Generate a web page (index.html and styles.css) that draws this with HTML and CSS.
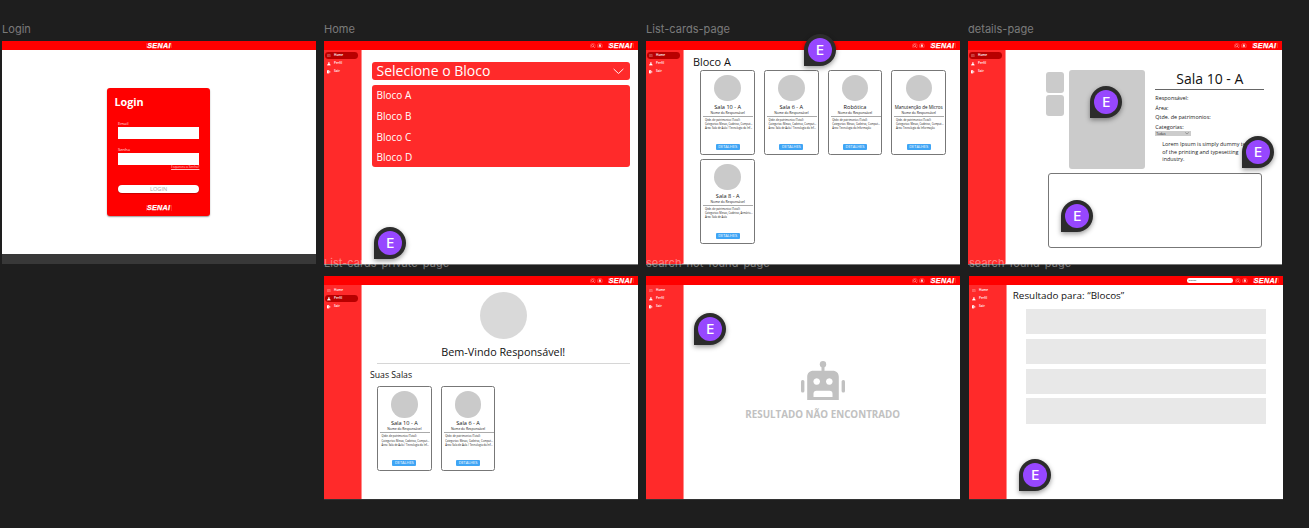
FILE: index.html
```html
<!DOCTYPE html>
<html lang="pt-BR">
<head>
<meta charset="utf-8">
<title>SENAI</title>
<link rel="stylesheet" href="styles.css">
</head>
<body>
<svg width="0" height="0" class="defs">
  <symbol id="search" viewBox="0 0 12 12"><circle cx="6" cy="6" r="5.3" fill="none" stroke="currentColor" stroke-opacity=".5"/><circle cx="5.4" cy="5.4" r="2.3" fill="none" stroke="currentColor"/><path d="M7 7l2.4 2.4" stroke="currentColor"/></symbol>
  <symbol id="bell" viewBox="0 0 12 12"><circle cx="6" cy="6" r="5.3" fill="none" stroke="currentColor" stroke-opacity=".6"/><path d="M6 2.5c2 0 2.2 1.500 2.200 3.500l.8 2H3l.8-2C3.800 4 4 2.500 6 2.500zM5 8.500h2v1H5z" fill="currentColor"/></symbol>
  <symbol id="home" viewBox="0 0 12 12"><path d="M1.500 1.500h9v9h-9zM4 4h4M4 6h4M4 8h4" fill="none" stroke="currentColor" stroke-opacity=".75"/></symbol>
  <symbol id="user" viewBox="0 0 12 12"><circle cx="6" cy="3.500" r="2.700" fill="currentColor"/><path d="M0 11c0-4 3-4.500 6-4.500s6 .5 6 4.500z" fill="currentColor"/></symbol>
  <symbol id="exit" viewBox="0 0 12 12"><path d="M0 1h7v3H5v4h2v3H0z" fill="currentColor"/><path d="M5 5h3V3l4 3-4 3V7H5z" fill="currentColor"/></symbol>
  <symbol id="chev" viewBox="0 0 12 7"><path d="M.7 1L6 6l5.300-5" fill="none" stroke="currentColor"/></symbol>
</svg>
<div class="canvas">

  <section class="frame login-frame">
    <header class="topbar centered"><span class="logo">SENAI</span></header>
    <main class="login-main">
      <form class="login">
        <h1>Login</h1>
        <label>Email</label><span class="field"></span>
        <label>Senha</label><span class="field"></span>
        <a class="forgot">Esqueceu a Senha?</a>
        <span class="submit">LOGIN</span>
        <span class="logo">SENAI</span>
      </form>
    </main>
    <footer class="foot"></footer>
  </section>

  <section class="frame home-frame">
    <header class="topbar"><svg><use href="#search"/></svg><svg><use href="#bell"/></svg><span class="logo">SENAI</span></header>
    <div class="body">
      <nav class="side"><a class="on"><svg><use href="#home"/></svg>Home</a><a><svg><use href="#user"/></svg>Perfil</a><a><svg><use href="#exit"/></svg>Sair</a></nav>
      <main class="home-main">
        <div class="select"><span>Selecione o Bloco</span><svg><use href="#chev"/></svg></div>
        <div class="options"><span>Bloco A</span><span>Bloco B</span><span>Bloco C</span><span>Bloco D</span></div>
      </main>
    </div>
  </section>

  <section class="frame list-frame">
    <header class="topbar"><svg><use href="#search"/></svg><svg><use href="#bell"/></svg><span class="logo">SENAI</span></header>
    <div class="body">
      <nav class="side"><a class="on"><svg><use href="#home"/></svg>Home</a><a><svg><use href="#user"/></svg>Perfil</a><a><svg><use href="#exit"/></svg>Sair</a></nav>
      <main class="list-main">
        <h2>Bloco A</h2>
        <div class="cards">
          <article class="card"><i></i><h3>Sala 10 - A</h3><h4>Nome do Responsável</h4><hr><p>Qtde. de patrimonios (Total):</p><p>Categorias: Mesas, Cadeiras, Comput...</p><p>Área: Sala de Aula / Tecnologia da Inf...</p><b>DETALHES</b></article>
          <article class="card"><i></i><h3>Sala 6 - A</h3><h4>Nome do Responsável</h4><hr><p>Qtde. de patrimonios (Total):</p><p>Categorias: Mesas, Cadeiras, Comput...</p><p>Área: Sala de Aula / Tecnologia da Inf...</p><b>DETALHES</b></article>
          <article class="card"><i></i><h3>Robótica</h3><h4>Nome do Responsável</h4><hr><p>Qtde. de patrimonios (Total):</p><p>Categorias: Mesas, Cadeiras, Comput...</p><p>Área: Tecnologia da Informação</p><b>DETALHES</b></article>
          <article class="card"><i></i><h3 class="long">Manutenção de Micros</h3><h4>Nome do Responsável</h4><hr><p>Qtde. de patrimonios (Total):</p><p>Categorias: Mesas, Cadeiras, Comput...</p><p>Área: Tecnologia da Informação</p><b>DETALHES</b></article>
          <article class="card"><i></i><h3>Sala 8 - A</h3><h4>Nome do Responsável</h4><hr><p>Qtde. de patrimonios (Total):</p><p>Categorias: Mesas, Cadeiras, Armário...</p><p>Área: Sala de Aula</p><b>DETALHES</b></article>
        </div>
      </main>
    </div>
  </section>

  <section class="frame details-frame">
    <header class="topbar"><svg><use href="#search"/></svg><svg><use href="#bell"/></svg><span class="logo">SENAI</span></header>
    <div class="body">
      <nav class="side"><a class="on"><svg><use href="#home"/></svg>Home</a><a><svg><use href="#user"/></svg>Perfil</a><a><svg><use href="#exit"/></svg>Sair</a></nav>
      <main class="details-main">
        <div class="product">
          <div class="thumbs"><span></span><span></span></div>
          <div class="photo"></div>
          <div class="info">
            <h2>Sala 10 - A</h2>
            <p>Responsável:</p><p>Área:</p><p>Qtde. de patrimonios:</p><p>Categorias:</p>
            <div class="mini">Todas<svg><use href="#chev"/></svg></div>
            <div class="lorem">Lorem Ipsum is simply dummy text<br>of the printing and typesetting<br>industry.</div>
          </div>
        </div>
        <div class="panel"></div>
      </main>
    </div>
  </section>

  <section class="frame private-frame">
    <header class="topbar"><svg><use href="#search"/></svg><svg><use href="#bell"/></svg><span class="logo">SENAI</span></header>
    <div class="body">
      <nav class="side"><a><svg><use href="#home"/></svg>Home</a><a class="on"><svg><use href="#user"/></svg>Perfil</a><a><svg><use href="#exit"/></svg>Sair</a></nav>
      <main class="private-main">
        <div class="avatar"></div>
        <h2>Bem-Vindo Responsável!</h2>
        <h3 class="sub">Suas Salas</h3>
        <div class="cards">
          <article class="card"><i></i><h3>Sala 10 - A</h3><h4>Nome do Responsável</h4><hr><p>Qtde. de patrimonios (Total):</p><p>Categorias: Mesas, Cadeiras, Comput...</p><p>Área: Sala de Aula / Tecnologia da Inf...</p><b>DETALHES</b></article>
          <article class="card"><i></i><h3>Sala 6 - A</h3><h4>Nome do Responsável</h4><hr><p>Qtde. de patrimonios (Total):</p><p>Categorias: Mesas, Cadeiras, Comput...</p><p>Área: Sala de Aula / Tecnologia da Inf...</p><b>DETALHES</b></article>
        </div>
      </main>
    </div>
  </section>

  <section class="frame empty-frame">
    <header class="topbar"><svg><use href="#search"/></svg><svg><use href="#bell"/></svg><span class="logo">SENAI</span></header>
    <div class="body">
      <nav class="side"><a><svg><use href="#home"/></svg>Home</a><a><svg><use href="#user"/></svg>Perfil</a><a><svg><use href="#exit"/></svg>Sair</a></nav>
      <main class="empty-main">
        <svg class="robot" viewBox="0 0 44 40"><g fill="#c1c1c1"><circle cx="22" cy="3.300" r="3.200"/><path d="M20.500 3h3v8h-3z"/><rect x="0" y="19" width="3.400" height="12.500" rx="1.500"/><rect x="40.600" y="19" width="3.400" height="12.500" rx="1.500"/><path fill-rule="evenodd" d="M6.200 39V16c0-4 2.300-6.300 6.300-6.300h19c4 0 6.300 2.300 6.300 6.300v23zM15.700 17.200a3.300 3.300 0 1 0 .01 0zM28.300 17.200a3.300 3.300 0 1 0 .01 0zM15.500 29.800q-3 0-3 3V36h19v-3.200q0-3-3-3z"/></g></svg>
        <p>RESULTADO NÃO ENCONTRADO</p>
      </main>
    </div>
  </section>

  <section class="frame found-frame">
    <header class="topbar"><span class="query">Blocos</span><svg><use href="#search"/></svg><svg><use href="#bell"/></svg><span class="logo">SENAI</span></header>
    <div class="body">
      <nav class="side"><a><svg><use href="#home"/></svg>Home</a><a><svg><use href="#user"/></svg>Perfil</a><a><svg><use href="#exit"/></svg>Sair</a></nav>
      <main class="found-main">
        <h2>Resultado para: “Blocos”</h2>
        <div class="rows"><span></span><span></span><span></span><span></span></div>
      </main>
    </div>
  </section>

  <span class="label l1">Login</span>
  <span class="label l2">Home</span>
  <span class="label l3">List-cards-page</span>
  <span class="label l4">details-page</span>
  <span class="label l5">List-cards-private-page</span>
  <span class="label l6">search-not-found-page</span>
  <span class="label l7">search-found-page</span>

  <span class="pin p1"><em>E</em></span>
  <span class="pin p2"><em>E</em></span>
  <span class="pin p3"><em>E</em></span>
  <span class="pin p4"><em>E</em></span>
  <span class="pin p5"><em>E</em></span>
  <span class="pin p6"><em>E</em></span>
  <span class="pin p7"><em>E</em></span>
</div>
</body>
</html>
```

FILE: styles.css
```css
* { box-sizing: border-box; }
body { margin: 0; background: #1e1e1e; font-family: "Open Sans", sans-serif; color: #111; }
h1, h2, h3, h4, p { margin: 0; font-weight: 400; white-space: nowrap; }
.defs { position: absolute; }
.canvas { position: relative; width: 1309px; height: 528px; overflow: hidden; }

/* frames on the free canvas */
.frame { position: absolute; top: 41px; width: 314px; height: 223px; background: #fff; display: flex; flex-direction: column; box-shadow: 0 1px 0 #777; }
.login-frame { left: 2px; box-shadow: none; }
.home-frame { left: 324px; }
.list-frame { left: 646px; }
.details-frame { left: 968px; }
.private-frame { left: 324px; }
.empty-frame { left: 646px; }
.found-frame { left: 969px; }
.private-frame, .empty-frame, .found-frame { top: 276px; box-shadow: 0 1px 0 #333; }

.label { position: absolute; font: 11px/14px Inter, sans-serif; letter-spacing: .03px; color: rgba(255, 255, 255, .42); top: 22px; white-space: nowrap; }
.l1 { left: 2px; }
.l2, .l5 { left: 324px; }
.l3, .l6 { left: 646px; }
.l4 { left: 968px; }
.l7 { left: 969px; }
.l5, .l6, .l7 { top: 256px; }

.pin { position: absolute; width: 32px; height: 32px; padding: 4px; background: #2c2c2c; border-radius: 16px 16px 16px 0; box-shadow: 0 2px 5px rgba(0, 0, 0, .4); }
.pin em { display: block; height: 24px; border-radius: 12px; background: #9747ff; color: #fff; font: 500 13.500px/24px Inter, sans-serif; text-align: center; }
.p1 { left: 374.400px; top: 227.400px; }
.p2 { left: 804px; top: 34.400px; }
.p3 { left: 1090.300px; top: 86.300px; }
.p4 { left: 1242px; top: 136.300px; }
.p5 { left: 1061.400px; top: 200.400px; }
.p6 { left: 694.400px; top: 313.400px; }
.p7 { left: 1019.400px; top: 459px; }

/* shared chrome */
.topbar { flex: none; height: 9px; background: #f00; color: #fff; display: flex; align-items: center; justify-content: flex-end; gap: 1.500px; padding-right: 4.500px; }
.topbar.centered { justify-content: center; padding: 0; }
.topbar svg { width: 5.800px; height: 5.800px; opacity: .85; }
.logo { display: block; width: 26px; height: 5.600px; border: solid rgba(255, 255, 255, .16); border-width: 0 1px; font: italic bold 7.200px/6px "Liberation Sans", sans-serif; letter-spacing: .3px; text-align: center; color: #fff; -webkit-text-stroke: .25px #fff; margin-left: 2.800px; }
.centered .logo { margin: 0; }
.body { flex: 1; display: flex; min-height: 0; }
.side { flex: none; width: 38px; background: #ff2a2a; padding: 2px 3px 0 1.400px; display: flex; flex-direction: column; gap: 1.400px; border-right: 1px solid #ff8b8b; }
.side a { display: flex; align-items: center; height: 6.700px; border-radius: 3.400px; padding-left: 2px; gap: 2.800px; color: #fff; font-size: 3.200px; font-weight: 600; line-height: 6.600px; padding-top: .4px; }
.side .on { background: #b80000; }
.side svg { width: 3.800px; height: 3.800px; }

/* login */
.login-main { flex: 1; padding: 38.400px 0 0 105.400px; }
.login { width: 102.500px; height: 128px; background: #f00; border-radius: 3px; box-shadow: 0 1px 1.500px rgba(0, 0, 0, .4); padding: 5.500px 10.500px 0; color: #fff; display: flex; flex-direction: column; }
.login h1 { font-size: 10.800px; line-height: 15px; font-weight: 700; margin: 0 0 12px -3.500px; }
.login label { font-size: 4.200px; line-height: 6px; opacity: .85; }
.login .field { height: 12px; background: #fff; margin-bottom: 8.400px; flex: none; }
.login .forgot { font-size: 3.200px; line-height: 5px; margin-top: -8.300px; text-align: right; text-decoration: underline; text-decoration-thickness: .3px; opacity: .75; }
.submit { height: 8.500px; margin-top: 14.600px; border-radius: 4.500px; background: #fff; box-shadow: 0 .5px 1px rgba(0, 0, 0, .4); color: #aaa; font-size: 5.600px; line-height: 9px; text-align: center; flex: none; }
.login .logo { margin: 11.500px auto 0; }
.foot { height: 10px; background: #383838; }

/* home */
.home-main { flex: 1; padding: 12px 8.300px 0 10px; }
.select { height: 17.500px; border-radius: 3px; background: #ff2a2a; color: #fff; display: flex; align-items: center; justify-content: space-between; padding: 0 5.500px 0 4.500px; font-size: 14px; line-height: 17px; }
.select svg { width: 11px; height: 6.500px; }
.options { margin-top: 5.200px; height: 82.800px; border-radius: 3px; background: #ff2a2a; color: #fff; display: grid; grid-template-rows: repeat(4, 20.700px); align-items: center; padding: .3px 0 0 4.500px; font-size: 10px; }

/* cards */
.list-main { flex: 1; padding: 2.500px 0 0 9px; }
.list-main h2 { font-size: 10.900px; line-height: 17.500px; height: 17.500px; }
.cards { display: grid; grid-template-columns: repeat(4, 54.700px); gap: 4.500px 9px; margin-left: 7.300px; }
.card { height: 84.500px; border: 1px solid #777; border-radius: 2.500px; padding-top: 4px; display: flex; flex-direction: column; align-items: center; overflow: hidden; }
.card i { width: 26.400px; height: 26.400px; border-radius: 50%; background: #cacaca; flex: none; }
.card h3 { font-size: 5.600px; line-height: 8px; margin-top: 1.500px; }
.card h3.long { font-size: 4.500px; }
.card h4 { font-size: 3.300px; line-height: 4px; }
.card hr { width: 50px; height: 1px; flex: none; border: 0; background: #aaa; margin: .8px 0 1.400px 1px; }
.card p { align-self: stretch; padding-left: 3.600px; font-size: 2.650px; line-height: 4.100px; color: #222; }
.card b { margin: auto 0 3.800px; width: 24px; height: 6px; border-radius: 1px; background: #3fa5f5; color: #fff; font-size: 3.900px; font-weight: 400; line-height: 6px; text-align: center; }

/* details */
.details-main { flex: 1; padding: 20px 18px 0 39.500px; }
.product { display: flex; height: 99px; }
.thumbs { width: 18.500px; padding-top: 2px; display: grid; grid-template-rows: 21px 21px; gap: 2px; }
.thumbs span, .photo { background: #cbcbcb; border-radius: 3px; }
.photo { width: 75.500px; margin: 0 10.800px 0 5px; }
.info { width: 109px; flex: none; color: #222; }
.info h2 { font-size: 14px; line-height: 18px; text-align: center; border-bottom: 1px solid #666; height: 20px; color: #111; margin-bottom: 3.800px; }
.info p { font-size: 5.450px; line-height: 9.700px; }
.mini { width: 35.500px; height: 5px; margin-top: -1.600px; padding: 0 2px 0 1px; background: #ccc; font-size: 3.300px; line-height: 5px; display: flex; justify-content: space-between; align-items: center; }
.mini svg { width: 4px; height: 2.500px; }
.lorem { margin: 5.200px 0 0 7px; font-size: 5.400px; line-height: 7.400px; white-space: nowrap; }
.panel { width: 213.500px; height: 75px; margin: 4px 0 0 2.700px; border: 1px solid #777; border-radius: 3px; }

/* private */
.private-main { flex: 1; padding: 7px 8.500px 0 8px; }
.avatar { width: 47.400px; height: 47.400px; border-radius: 50%; background: #d9d9d9; margin: 0 0 0 110px; }
.private-main h2 { margin-left: 7px; height: 24.600px; font-size: 10.800px; line-height: 25.400px; text-align: center; border-bottom: 1px solid #d6d6d6; }
.sub { font-size: 8.700px; line-height: 22.400px; height: 22.400px; }
.private-main .cards { margin-left: 7px; }

/* search results */
.empty-main { flex: 1; display: flex; flex-direction: column; align-items: center; padding: 76px 0 0 1.400px; }
.robot { width: 44px; height: 40px; }
.empty-main p { font-size: 9.800px; font-weight: 700; color: #c1c1c1; line-height: 14px; margin-top: 7px; }
.query { width: 46px; height: 4.600px; border-radius: 2.300px; background: #fff; color: #333; font-size: 2.500px; line-height: 4.600px; padding-left: 2px; margin-right: 1px; }
.found-main { flex: 1; padding: 2px 17px 0 5.800px; }
.found-main h2 { font-size: 9.850px; line-height: 16px; height: 16px; }
.rows { margin: 6px 0 0 12.800px; display: grid; grid-template-rows: repeat(4, 25.300px); gap: 4.500px; }
.rows span { background: #e8e8e8; }
```
